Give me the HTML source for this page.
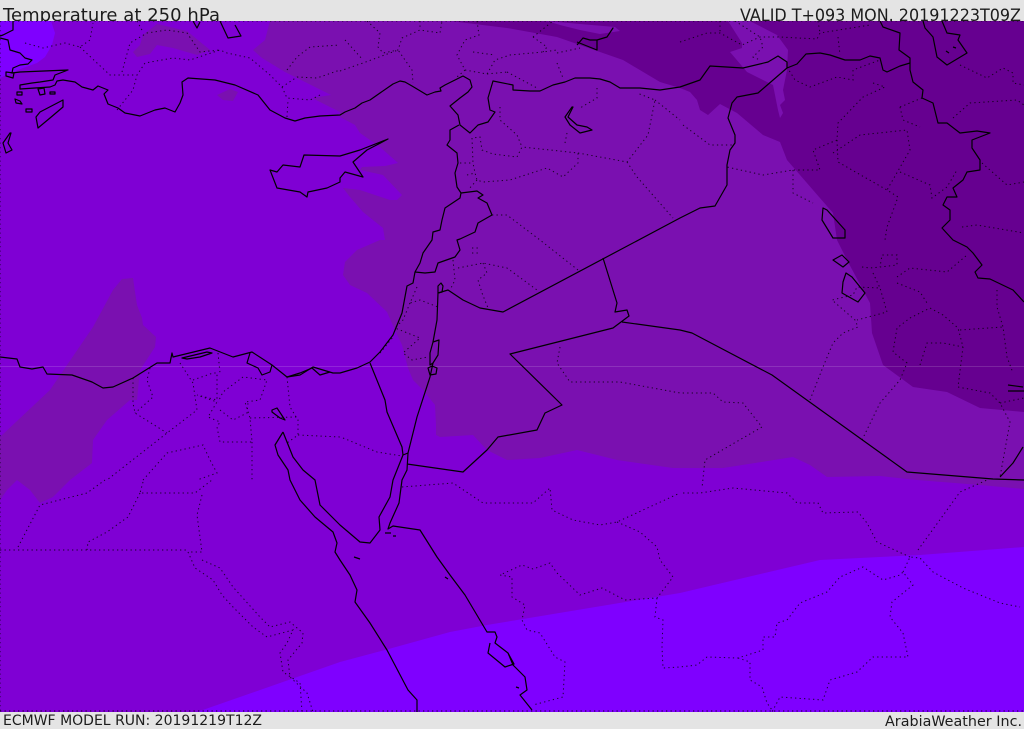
<!DOCTYPE html>
<html><head><meta charset="utf-8"><title>Temperature at 250 hPa</title>
<style>
html,body{margin:0;padding:0;background:#e4e4e4;width:1024px;height:729px;overflow:hidden}
svg{display:block}
text{font-family:"DejaVu Sans","Liberation Sans",sans-serif;fill:#1c1c1c}
.c path{fill:none;stroke:#000;stroke-width:1.2;stroke-linejoin:round}
.d path{fill:none;stroke:#000;stroke-width:1;stroke-dasharray:1.3 3.2;stroke-opacity:.8}
</style></head><body>
<svg width="1024" height="729" viewBox="0 0 1024 729" xmlns="http://www.w3.org/2000/svg">
<rect width="1024" height="729" fill="#e4e4e4"/>
<text x="3" y="21" font-size="18" textLength="217" lengthAdjust="spacing">Temperature at 250 hPa</text>
<text x="740" y="21" font-size="16.4" textLength="281" lengthAdjust="spacingAndGlyphs">VALID T+093 MON. 20191223T09Z</text>
<text x="3" y="725" font-size="14" textLength="259" lengthAdjust="spacing">ECMWF MODEL RUN: 20191219T12Z</text>
<text x="885" y="726" font-size="14.3" textLength="137" lengthAdjust="spacing">ArabiaWeather Inc.</text>
<svg x="0" y="21" width="1024" height="691" viewBox="0 21 1024 691">
<rect x="0" y="21" width="1024" height="691" fill="#7f00d4"/>
<path fill="#7f00ff" d="M0 21H51L55 33 52 45 45 57 37 63 23 68 13 72 0 78Z"/>
<path fill="#7f00ff" d="M197 712L340 662 385 650 450 632 487 625 680 593 820 560 920 555 1024 547V712Z"/>
<g fill="#7a10b0">
<path d="M133 52L140 45 143 35 157 24 187 31 210 50 197 55 173 48 157 45 150 54 137 57Z"/>
<path d="M217 95L230 89 238 92 233 101 223 100Z"/>
<path d="M0 437L50 390 93 327 113 290 122 279 133 278 135 292 137 305 142 318 143 325 156 337 155 347 140 370 137 400 130 400 107 420 93 440 92 463 70 480 53 497 40 503 30 490 17 480 7 490 0 500Z"/>
<path d="M270 21L265 40 253 50 262 58 285 72 331 95 312 98 340 112 340 117 355 125 360 133 380 147 398 163 385 166 362 167 360 170 383 175 402 195 397 200 390 200 360 190 343 188 350 197 363 212 383 228 385 240 380 240 357 250 345 262 343 275 350 285 367 293 387 312 395 330 402 345 408 368 413 380 423 390 435 405 436 425 436 435 440 437 473 435 487 450 507 460 540 458 577 450 617 460 673 468 723 468 793 457 810 465 827 477 880 476 917 480 980 485 1024 489V21Z"/>
</g>
<path fill="#660090" d="M450 21L507 28 557 37 623 60 660 82 680 88 690 92 697 100 700 110 708 115 720 104 737 113 763 135 780 142 787 160 813 190 833 213 837 240 847 260 863 290 870 303 872 333 883 365 913 387 947 392 980 408 1024 412V21Z"/>
<g fill="#7a10b0">
<path d="M547 21L580 24 615 27 620 31 600 34 580 30 560 25Z"/>
<path d="M728 21H750L777 35 788 50 787 70 783 90 785 100 780 105 783 113 780 118 778 110 776 100 773 85 747 72 730 52 742 48 742 43Z"/>
</g>
<rect x="0" y="366" width="1024" height="1" fill="#fff" fill-opacity=".14"/>
<g class="d">
<path d="M0 21H1024M0 711H1024M0 21V711"/>
<path d="M25 43L43 48 65 43 80 47 90 40 93 23M80 47L97 63 110 75 137 75 145 63 173 58 190 60 220 50 227 53 250 58 270 75 282 87 287 98 310 100 320 95M117 110L133 90 137 75M122 72L130 43 147 33 167 30 187 33 200 52 220 50M137 21L143 32M287 70L297 57 310 47 340 45M282 87L297 77 317 78 340 70M287 117L288 100"/>
<path d="M340 71L363 63 398 50 412 70 413 83M345 40L363 60M367 21L380 33 378 47 383 53 398 50 402 38 420 30 440 33 442 21M420 21V30M477 21L479 35 465 40 457 55 465 70 457 77M465 70L487 74 495 60 510 55 543 52 557 50M473 52L495 55M533 37L553 21M533 37L547 47 543 52M557 53L580 48M557 63L563 78M507 72L537 88M487 74L507 72M597 88V98L580 108"/>
<path d="M500 107V120L517 135 522 147 517 157 493 154 482 150 480 137 472 138 473 163 475 173 477 180 483 182 510 180 547 168 563 177 578 163 578 153 522 147M578 153L627 162 648 135 655 100 637 93M655 100L680 120M565 143L567 133M627 162L637 177 673 218M460 163H473M467 175L475 173M477 180L468 190M492 215H507L540 240 578 270M472 248H478M472 253H478M453 260L455 280 450 290M458 268L483 263 507 268 537 290M483 263L487 273 478 280 482 293 488 308M417 287L410 303 420 300 438 307M410 303L403 320 395 328 420 338 403 353 412 360 428 357M380 353L393 337"/>
<path d="M560 347L557 363 570 382 620 382 680 393 713 393 723 402 743 403 762 427 705 460 702 488"/>
<path d="M810 400L823 367 833 343 843 333 858 327 855 320 832 300 853 295 857 287 880 288 887 312 857 320M862 440L880 403 900 380 907 363 893 352 897 328 910 318 930 308 943 315 958 328 963 347 958 387 990 393 1000 403 1010 422 1000 477M920 365L927 343 943 343 963 347M862 267L870 268 880 267 897 265 897 255 882 255 880 267M897 277L910 268 947 272 967 255M873 273L880 288M897 283L920 292 927 303M960 330L1003 327M997 290V307L1003 327 1007 357 1013 373M1000 403L1024 398"/>
<path d="M680 42L707 33 720 33 742 45 760 37 780 37 817 39 820 33 870 25M720 21V33M735 21L760 37 763 47 753 57 760 60M818 21L820 33M838 37L840 55M787 67L795 80 810 87 837 77 853 80 853 70 880 60M873 83L885 87 863 97 838 123 837 140 813 150 820 170 793 170 763 175 727 167M793 170V193L813 203M837 140L838 162 887 190 898 197 887 227 885 240M833 153L860 135 907 130 910 150 887 190M900 107L903 120 920 127M900 107L922 98M953 118L970 103 1017 100 1024 105M900 172L930 185 932 198 947 187 957 170M962 227L977 225 1024 233M982 163L1007 185 1024 182M960 65L987 78 1003 68 1013 73 1013 83 1024 85M683 125L710 145 732 145"/>
<path d="M133 378V403L135 413 167 433M150 368L147 380 153 397 135 413M180 363L193 383 197 410 167 433 107 480M143 480L167 453 203 445 210 460 217 473 197 480M193 380L213 373 217 373V400L197 395 217 402 208 417 220 422 217 427 220 442H252L250 418 245 402 260 400 267 380 243 377 223 392 218 402M220 410L233 420 247 413 248 403M218 353L220 373M287 377L290 407 298 420V435L287 443M298 435L340 437M250 418L297 417M252 442V480M343 438L377 452 402 456"/>
<path d="M0 550H188M18 547L40 505 87 493 105 480M143 482L140 493H195L212 480M140 493L128 517 107 532 88 542 87 550M202 495L197 515 202 552 188 552M188 552L195 568 213 580 222 595 233 607 253 627 267 637 293 630 287 643 280 653 283 672 300 683 302 712M202 560L220 568 233 587 260 617 270 627 290 622 303 633 302 643 288 660 290 677 307 693 313 712"/>
<path d="M402 487L453 483 483 503 533 503 550 488 552 510 573 520 600 525 617 522 680 493M617 522L640 532 657 547 660 560 673 577 657 598 625 600 602 588 580 595 557 573 550 563 533 569 522 565 500 575 512 577 512 597 525 605 522 620 527 630 540 633 555 657 565 662 563 697 533 705M657 598L655 617 663 620 662 647 663 668 680 667 697 665 707 657 738 658 763 650 763 637 775 637 777 623 787 620 800 603 827 592 840 577 863 567 883 580 900 575 903 572 913 585 892 602 890 617 903 633 908 657 873 657 857 672 830 680 823 700 780 697 772 712M738 658L750 662V680L762 687 767 703 772 710M903 572L910 557 920 558 933 572 963 588 1000 603 1020 607M918 550L960 492 987 480M910 557L877 542 867 523 858 512 823 513 818 503 797 503 787 493 733 488 700 493 680 493"/>
</g>
<g class="c">
<path d="M13 21V30L3 35 0 36M0 38L8 40 10 50 20 53 25 58 32 60 28 64 20 65 13 68 12 73 20 72 68 70 55 75 53 80 40 82 32 83 20 85 20 89 50 87 55 85 57 81 63 80 75 82 82 87 93 90 98 86 108 90 104 94 108 104 118 108 125 113 135 115 140 116 155 110 165 108 175 112 180 103 183 95 182 82 188 78 215 80 235 85 258 95 270 110 285 118 295 121 305 118 320 116 340 115 345 112 355 108 362 103 370 100 380 93 393 84 400 81 405 82 412 86 427 95 435 92 441 91 440 88 445 85 455 80 463 76 470 80 472 87 468 92 460 98 450 106 458 115 460 125 470 133 478 125 488 122 495 112 490 110 488 98 493 81 513 85 513 90 530 91 540 91 553 85 565 82 575 78 590 78 600 79 610 82 615 85 620 88 640 88 660 90 680 87 700 80 710 66 743 68 768 62 778 56 787 62 787 68 797 64 806 54 820 53 830 55 845 60 860 60 870 56 880 58 883 70 887 72 900 66 910 63 910 70 913 82 923 90 922 98 933 103 938 123 947 123 960 133 977 131 990 133 972 140 972 148 980 160 980 170 967 172 963 180 953 188 957 197 947 197 943 205 950 210 950 220 942 228 953 240 967 247 973 253 982 265 975 272 978 278 990 279 1013 290 1024 302"/>
<path d="M880 21L883 27 900 33 899 50 910 58 910 63"/>
<path d="M787 68L758 93 737 97 732 103 728 118 735 135 735 143 730 150 727 165 727 185 715 206 700 208 680 218 503 312 480 308 463 300 448 290 438 293 437 320 433 342"/>
<path d="M603 258L617 303 615 312 627 310 629 316 613 328 510 354 562 405 545 413 537 430 498 437 487 450 463 472 407 464M622 322L680 330 692 333 772 375 907 472 993 479 1024 480M1000 477L1013 463 1023 447"/>
<path d="M459 125L450 130 450 140 447 145 457 153 458 163 455 173 457 187 461 193 460 198 445 208 442 220 440 230 433 232 432 240 423 253 420 263 415 272 413 283 407 286 402 313 393 335 380 352 370 362 357 368 340 373 333 373 313 367 300 375 287 377 272 365 252 352 233 357 210 348 173 357 172 353 170 363 157 363 133 378 113 387 103 388 92 382 72 375 47 374 43 367 32 369 20 367 17 359 0 357"/>
<path d="M182 358L207 352 212 353 200 357 187 359ZM250 353L247 363 258 368 262 375 270 372 272 365M287 377L300 373 312 368 320 375 330 372"/>
<path d="M272 410L277 408 285 420 280 418 272 412Z"/>
<path d="M283 432L275 445 278 455 288 470 290 480 300 500 315 517 333 532 337 543 335 552 340 560 350 575 357 590 355 602 370 623 387 650 408 690 417 700 417 712"/>
<path d="M283 432L293 457 303 470 315 480 320 505 340 525 360 542 370 543 380 530 379 517 390 497 393 480 403 455 408 453 407 470 402 480 399 503 390 523 388 529 393 526 420 530 437 557 450 575 465 595 487 632 495 632 497 637 495 643 508 653 513 665 525 677 527 690 520 695 532 710"/>
<path d="M490 643L488 653 505 667 514 664 508 653"/>
<path d="M370 363L385 400 387 412 402 447 403 455M408 453L417 417 430 377 433 363 438 355 439 340 433 342 430 353 430 365 433 363M428 368L430 375 436 374 437 368 432 366ZM438 293L438 286 441 283 443 286 442 292Z"/>
<path d="M415 272L425 273 435 272 438 263 455 257 460 250 457 240 460 239 475 232 478 223 492 215 487 203 478 198 483 195 477 191 461 193"/>
<path d="M270 170L277 172 283 165 300 167 304 155 340 156 360 150 388 139 367 150 353 162 357 168 363 177 345 172 340 178 340 182 327 188 308 192 307 197 300 192 277 188Z"/>
<path d="M63 100L40 112 36 117 38 128 50 118 63 107ZM10 133L3 143 6 153 12 150 8 143 11 133ZM6 72L14 73 13 78 6 76ZM17 92H22V95H17ZM26 109H32V112H26ZM38 89L44 88 45 94 40 95ZM50 92H55V94H50ZM15 99L20 101 22 104 16 103Z"/>
<path d="M572 107L565 117 570 125 580 133 592 130 587 127 577 125 568 117 573 107Z"/>
<path d="M577 42L597 50 597 40 607 37 613 28 607 37 597 40 590 40 583 38 577 45"/>
<path d="M923 21L925 28 933 37 937 57 947 65 967 53 958 40 960 35 947 33 942 21M946 51L949 53M953 47L956 48"/>
<path d="M823 208L822 220 833 238 845 238 845 230 827 210ZM833 260L842 255 849 262 843 267ZM846 273L843 282 842 293 858 302 865 293 852 277ZM1008 385L1023 387M1008 391H1024"/>
<path d="M354 557L360 559M385 533H391M393 536H396M445 577L448 579M516 687L519 688"/>
<path d="M220 21L228 38 241 36 235 25M193 21L197 28 200 22"/>
</g>
</svg>
</svg>
</body></html>
